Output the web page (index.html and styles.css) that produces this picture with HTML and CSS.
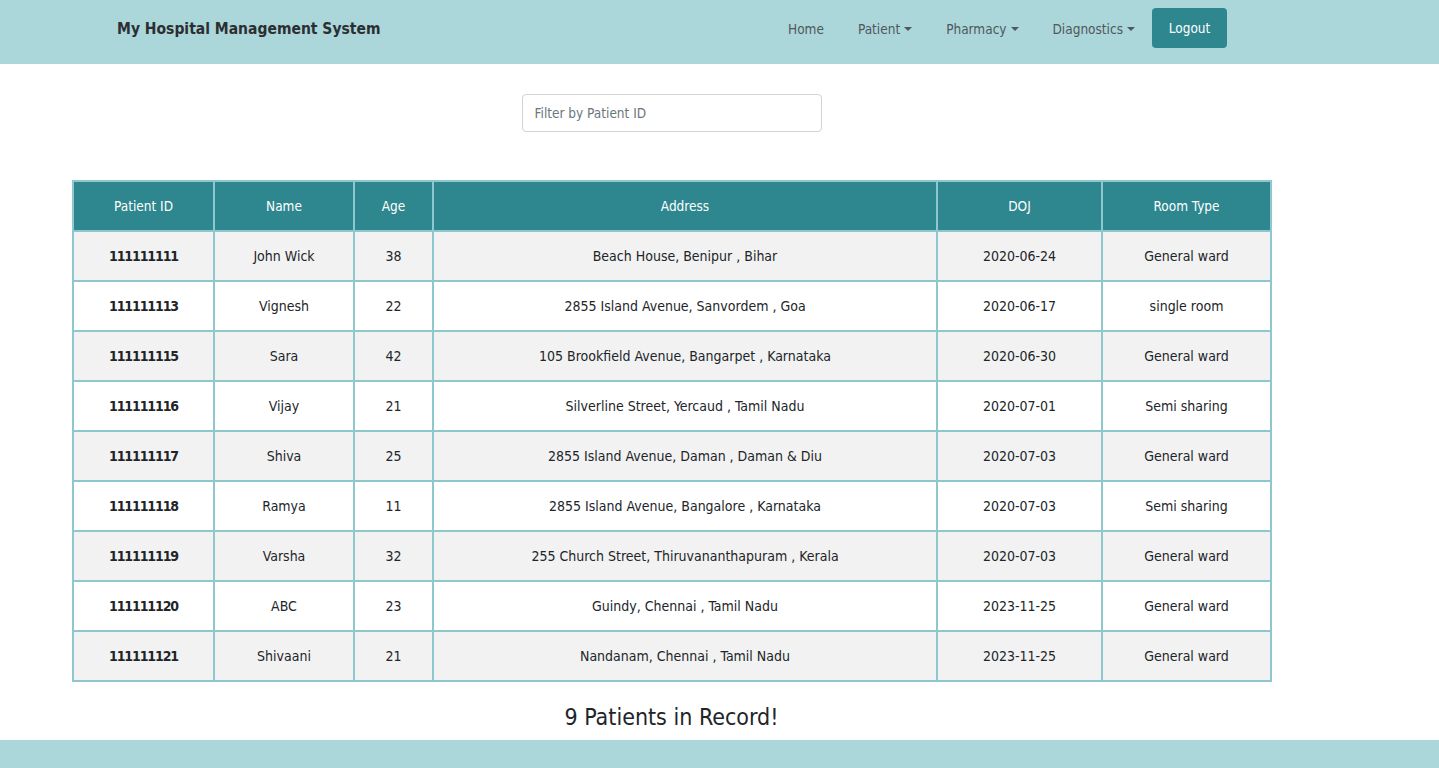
FILE: index.html
```html
<!DOCTYPE html>
<html lang="en">
<head>
<meta charset="utf-8">
<title>My Hospital Management System</title>
<link rel="stylesheet" href="styles.css">
</head>
<body>
<nav class="navbar">
  <a class="brand" href="#">My Hospital Management System</a>
  <ul class="nav">
    <li><a class="nav-link" href="#">Home</a></li>
    <li><a class="nav-link dropdown" href="#">Patient</a></li>
    <li><a class="nav-link dropdown" href="#">Pharmacy</a></li>
    <li><a class="nav-link dropdown" href="#">Diagnostics</a></li>
    <li><a class="btn-logout" href="#">Logout</a></li>
  </ul>
</nav>
<main class="content">
  <div class="filter-row">
    <input class="filter" type="text" placeholder="Filter by Patient ID">
  </div>
  <table class="patients">
    <colgroup>
      <col class="c-id"><col class="c-name"><col class="c-age"><col class="c-addr"><col class="c-doj"><col class="c-room">
    </colgroup>
    <thead>
      <tr><th>Patient ID</th><th>Name</th><th>Age</th><th>Address</th><th>DOJ</th><th>Room Type</th></tr>
    </thead>
    <tbody>
      <tr><td class="pid">111111111</td><td>John Wick</td><td>38</td><td>Beach House, Benipur , Bihar</td><td>2020-06-24</td><td>General ward</td></tr>
      <tr><td class="pid">111111113</td><td>Vignesh</td><td>22</td><td>2855 Island Avenue, Sanvordem , Goa</td><td>2020-06-17</td><td>single room</td></tr>
      <tr><td class="pid">111111115</td><td>Sara</td><td>42</td><td>105 Brookfield Avenue, Bangarpet , Karnataka</td><td>2020-06-30</td><td>General ward</td></tr>
      <tr><td class="pid">111111116</td><td>Vijay</td><td>21</td><td>Silverline Street, Yercaud , Tamil Nadu</td><td>2020-07-01</td><td>Semi sharing</td></tr>
      <tr><td class="pid">111111117</td><td>Shiva</td><td>25</td><td>2855 Island Avenue, Daman , Daman &amp; Diu</td><td>2020-07-03</td><td>General ward</td></tr>
      <tr><td class="pid">111111118</td><td>Ramya</td><td>11</td><td>2855 Island Avenue, Bangalore , Karnataka</td><td>2020-07-03</td><td>Semi sharing</td></tr>
      <tr><td class="pid">111111119</td><td>Varsha</td><td>32</td><td>255 Church Street, Thiruvananthapuram , Kerala</td><td>2020-07-03</td><td>General ward</td></tr>
      <tr><td class="pid">111111120</td><td>ABC</td><td>23</td><td>Guindy, Chennai , Tamil Nadu</td><td>2023-11-25</td><td>General ward</td></tr>
      <tr><td class="pid">111111121</td><td>Shivaani</td><td>21</td><td>Nandanam, Chennai , Tamil Nadu</td><td>2023-11-25</td><td>General ward</td></tr>
    </tbody>
  </table>
  <h3 class="count">9 Patients in Record!</h3>
</main>
<footer class="footer"></footer>
</body>
</html>
```

FILE: styles.css
```css
* { box-sizing: border-box; }

html, body {
  margin: 0;
  padding: 0;
}

body {
  font-family: "DejaVu Sans Condensed", "DejaVu Sans", sans-serif;
  font-stretch: condensed;
  color: #212529;
  background: #ffffff;
  height: 768px;
  overflow: hidden;
}

a { text-decoration: none; }

.navbar {
  height: 64px;
  background: #abd6da;
  display: flex;
  align-items: flex-start;
  justify-content: space-between;
  padding: 8px 212px 0 117px;
}

.brand {
  height: 40px;
  line-height: 42px;
  font-size: 15.5px;
  font-weight: bold;
  color: #2b2f31;
}

.nav {
  list-style: none;
  margin: 0;
  padding: 0;
  display: flex;
  align-items: flex-start;
}

.nav-link {
  display: block;
  height: 40px;
  line-height: 42px;
  padding: 0 17px;
  font-size: 13.5px;
  color: #4f585a;
}

.dropdown::after {
  content: "";
  display: inline-block;
  margin-left: 4px;
  vertical-align: 3px;
  border-top: 4px solid #4f585a;
  border-left: 4px solid transparent;
  border-right: 4px solid transparent;
}

.btn-logout {
  display: block;
  height: 40px;
  line-height: 40px;
  padding: 0 15px;
  min-width: 75px;
  text-align: center;
  font-size: 13.5px;
  color: #ffffff;
  background: #2e868e;
  border-radius: 4px;
}

.content {
  width: 1199px;
  margin-left: 72px;
}

.filter-row {
  display: flex;
  justify-content: center;
  padding-top: 30px;
}

.filter {
  width: 300px;
  height: 38px;
  border: 1px solid #ced4da;
  border-radius: 4px;
  padding: 0 12px;
  font-family: inherit;
  font-size: 13.5px;
  color: #495057;
  background: #fff;
  outline: none;
}

.filter::placeholder { color: #6c757d; }

.patients {
  margin-top: 48px;
  width: 1198px;
  border-collapse: collapse;
  table-layout: fixed;
  border: 2px solid #8ec7cd;
}

.c-id { width: 141px; }
.c-name { width: 140px; }
.c-age { width: 79px; }
.c-addr { width: 504px; }
.c-doj { width: 165px; }
.c-room { width: 169px; }

.patients th,
.patients td {
  border: 2px solid #8ec7cd;
  height: 50px;
  padding: 0 8px;
  text-align: center;
  vertical-align: middle;
  font-size: 14px;
}

.patients th {
  background: #2e868e;
  color: #ffffff;
  font-weight: normal;
  font-size: 13.5px;
}

.patients tbody tr:nth-child(odd) { background: #f2f2f2; }
.patients tbody tr:nth-child(even) { background: #ffffff; }

.pid {
  font-weight: bold;
  letter-spacing: -1.1px;
}

.count {
  margin: 15px 0 3px;
  line-height: 40px;
  font-size: 23px;
  font-weight: normal;
  text-align: center;
}

.footer {
  height: 28px;
  background: #abd6da;
}
```
